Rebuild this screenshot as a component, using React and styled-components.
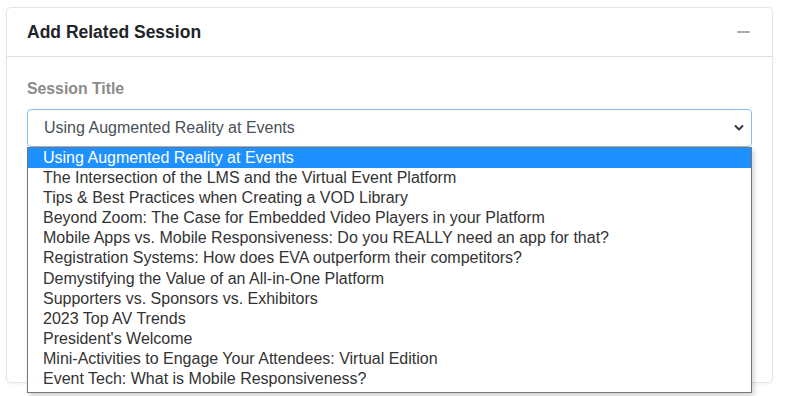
import React from 'react';
import styled, { createGlobalStyle } from 'styled-components';

const GlobalStyle = createGlobalStyle`
    html, body {
        margin: 0;
        padding: 0;
        background: #fff;
        font-family: "Liberation Sans", Arial, sans-serif;
    }
`;

const SESSIONS = [
    'Using Augmented Reality at Events',
    'The Intersection of the LMS and the Virtual Event Platform',
    'Tips & Best Practices when Creating a VOD Library',
    'Beyond Zoom: The Case for Embedded Video Players in your Platform',
    'Mobile Apps vs. Mobile Responsiveness: Do you REALLY need an app for that?',
    'Registration Systems: How does EVA outperform their competitors?',
    'Demystifying the Value of an All-in-One Platform',
    'Supporters vs. Sponsors vs. Exhibitors',
    '2023 Top AV Trends',
    "President's Welcome",
    'Mini-Activities to Engage Your Attendees: Virtual Edition',
    'Event Tech: What is Mobile Responsiveness?'
];

const Page = styled.div`
    padding: 7px 14px 14px 6px;
`;

const Card = styled.section`
    border: 1px solid #e6e6e6;
    border-radius: 5px;
    background: #fff;
    box-shadow: 0 1px 3px rgba(0, 0, 0, 0.06);
`;

const Header = styled.header`
    display: flex;
    align-items: center;
    justify-content: space-between;
    height: 48px;
    padding: 0 22px 0 20px;
    border-bottom: 1px solid #dedede;
`;

const Title = styled.h3`
    margin: 0;
    font-size: 17.5px;
    font-weight: 700;
    color: #212529;
`;

const Collapse = styled.span`
    display: block;
    width: 13px;
    height: 2px;
    background: #a3aab2;
    border-radius: 1px;
`;

const Body = styled.div`
    box-sizing: border-box;
    min-height: 325px;
    padding: 21px 20px 20px 20px;
`;

const Label = styled.label`
    display: block;
    margin-bottom: 10px;
    font-size: 15.8px;
    line-height: 21px;
    font-weight: 700;
    color: #8a8a8a;
`;

const SelectWrap = styled.div`
    position: relative;
`;

const SelectBox = styled.div`
    box-sizing: border-box;
    display: flex;
    align-items: center;
    justify-content: space-between;
    height: 38px;
    padding: 0 7px 0 16px;
    border: 1px solid #80bdff;
    border-radius: 4px;
    font-size: 16px;
    color: #495057;
`;

const Menu = styled.ul`
    position: absolute;
    top: 100%;
    left: 0;
    right: 0;
    margin: 0;
    padding: 0 0 3px;
    list-style: none;
    background: #fff;
    border: 1px solid #767676;
    box-shadow: 2px 3px 5px rgba(0, 0, 0, 0.18);
    z-index: 2;
`;

const Option = styled.li`
    height: 20.1px;
    line-height: 20px;
    padding-left: 15px;
    font-size: 16px;
    white-space: nowrap;
    color: ${p => (p.$active ? '#fff' : '#333')};
    background: ${p => (p.$active ? '#1e90ff' : 'transparent')};
`;

const Chevron = () => (
    <svg width="10" height="8" viewBox="0 0 10 8">
        <polyline
            points="1.5,2 5,5.5 8.5,2"
            fill="none"
            stroke="#343a40"
            strokeWidth="2"
            strokeLinecap="round"
            strokeLinejoin="round"
        />
    </svg>
);

const App = () => {
    const selected = SESSIONS[0];
    return (
        <Page>
            <GlobalStyle />
            <Card>
                <Header>
                    <Title>Add Related Session</Title>
                    <Collapse />
                </Header>
                <Body>
                    <Label>Session Title</Label>
                    <SelectWrap>
                        <SelectBox>
                            <span>{selected}</span>
                            <Chevron />
                        </SelectBox>
                        <Menu>
                            {SESSIONS.map(s => (
                                <Option key={s} $active={s === selected}>
                                    {s}
                                </Option>
                            ))}
                        </Menu>
                    </SelectWrap>
                </Body>
            </Card>
        </Page>
    );
};

export default App;
